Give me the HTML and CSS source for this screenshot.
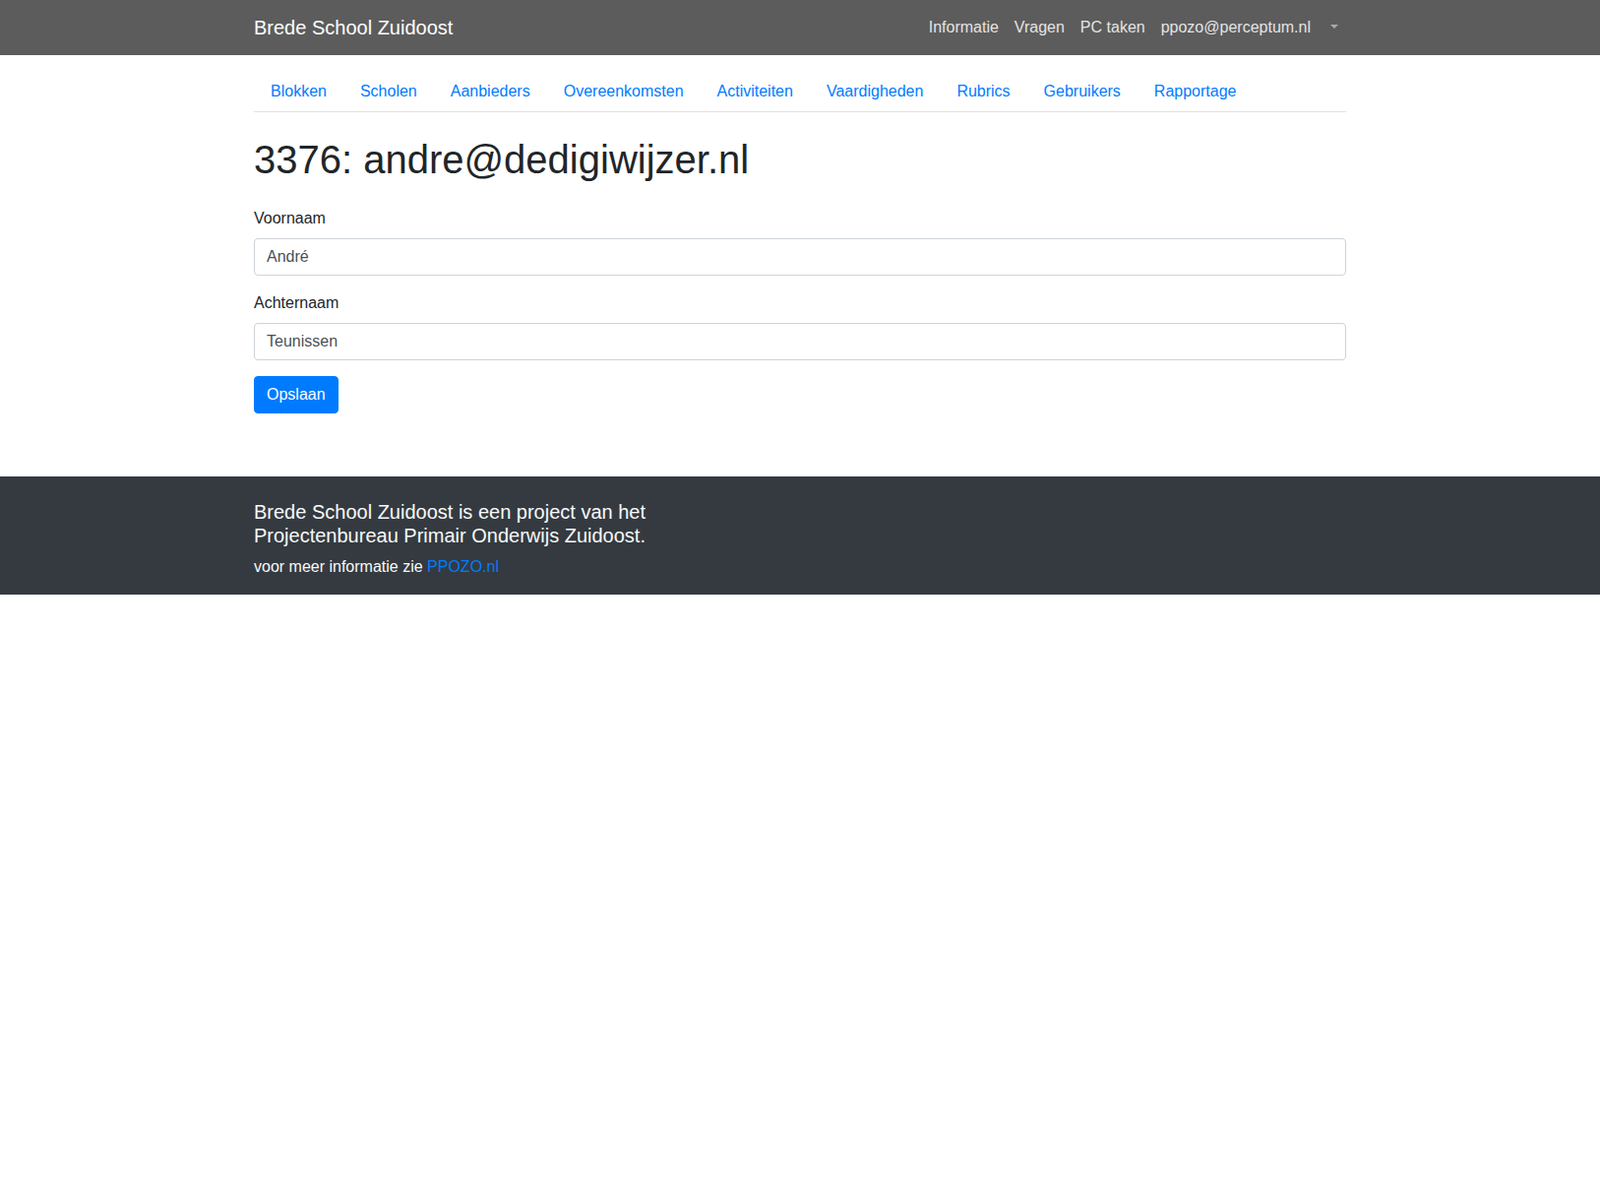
FILE: index.html
```html
<!DOCTYPE html>
<html lang="nl">
<head>
<meta charset="utf-8">
<title>Brede School Zuidoost</title>
<link rel="stylesheet" href="styles.css">
</head>
<body>
<nav class="topbar">
  <div class="container topbar-inner">
    <a class="brand" href="#">Brede School Zuidoost</a>
    <ul class="topnav">
      <li><a class="topnav-link" href="#">Informatie</a></li>
      <li><a class="topnav-link" href="#">Vragen</a></li>
      <li><a class="topnav-link" href="#">PC taken</a></li>
      <li><a class="topnav-link" href="#">ppozo@perceptum.nl</a></li>
      <li><a class="topnav-link toggle" href="#"><span class="caret"></span></a></li>
    </ul>
  </div>
</nav>

<main class="container main">
  <ul class="tabs">
    <li><a class="tab-link" href="#">Blokken</a></li>
    <li><a class="tab-link" href="#">Scholen</a></li>
    <li><a class="tab-link" href="#">Aanbieders</a></li>
    <li><a class="tab-link" href="#">Overeenkomsten</a></li>
    <li><a class="tab-link" href="#">Activiteiten</a></li>
    <li><a class="tab-link" href="#">Vaardigheden</a></li>
    <li><a class="tab-link" href="#">Rubrics</a></li>
    <li><a class="tab-link" href="#">Gebruikers</a></li>
    <li><a class="tab-link" href="#">Rapportage</a></li>
  </ul>

  <h1 class="title">3376: andre@dedigiwijzer.nl</h1>

  <form class="form">
    <div class="form-group">
      <label class="label" for="voornaam">Voornaam</label>
      <input class="input" id="voornaam" type="text" value="André">
    </div>
    <div class="form-group">
      <label class="label" for="achternaam">Achternaam</label>
      <input class="input" id="achternaam" type="text" value="Teunissen">
    </div>
    <button class="btn" type="button">Opslaan</button>
  </form>
</main>

<footer class="footer">
  <div class="container">
    <h5 class="footer-title">Brede School Zuidoost is een project van het<br>Projectenbureau Primair Onderwijs Zuidoost.</h5>
    <p class="footer-text">voor meer informatie zie <a class="footer-link" href="#">PPOZO.nl</a></p>
  </div>
</footer>
</body>
</html>
```

FILE: styles.css
```css
* {
  box-sizing: border-box;
}

html, body {
  margin: 0;
  padding: 0;
}

body {
  font-family: "Liberation Sans", Arial, Helvetica, sans-serif;
  font-size: 16px;
  line-height: 1.5;
  color: #212529;
  background: #ffffff;
}

a {
  text-decoration: none;
}

.container {
  width: 100%;
  max-width: 1140px;
  margin: 0 auto;
  padding: 0 15px;
}

/* Top bar */
.topbar {
  background: #5c5c5c;
  height: 56px;
}

.topbar-inner {
  height: 56px;
  display: flex;
  align-items: center;
  justify-content: space-between;
}

.brand {
  color: #ffffff;
  font-size: 20px;
  line-height: 30px;
}

.topnav {
  list-style: none;
  margin: 0;
  padding: 0;
  display: flex;
  align-items: center;
}

.topnav-link {
  display: block;
  padding: 8px;
  color: #e4e4e4;
  font-size: 16px;
  line-height: 24px;
}

.caret {
  display: inline-block;
  margin-left: 4px;
  vertical-align: 4px;
  width: 0;
  height: 0;
  border-top: 4.8px solid #a9a9a9;
  border-left: 4.8px solid transparent;
  border-right: 4.8px solid transparent;
}

/* Tabs */
.main {
  padding-bottom: 64px;
}

.tabs {
  list-style: none;
  margin: 16px 0 0;
  padding: 0;
  display: flex;
  border-bottom: 1px solid #dee2e6;
}

.tab-link {
  display: block;
  padding: 8px 16px;
  margin-bottom: -1px;
  border: 1px solid transparent;
  color: #007bff;
  line-height: 24px;
}

.title {
  font-size: 40px;
  font-weight: 500;
  line-height: 1.2;
  margin: 24px 0 24px;
  color: #212529;
}

/* Form */
.form {
  margin: 0;
}

.form-group {
  margin-bottom: 16px;
}

.label {
  display: block;
  margin-bottom: 8px;
  line-height: 24px;
}

.input {
  display: block;
  width: 100%;
  height: 38px;
  padding: 6px 12px;
  font-family: inherit;
  font-size: 16px;
  line-height: 24px;
  color: #495057;
  background: #ffffff;
  border: 1px solid #ced4da;
  border-radius: 4px;
}

.btn {
  display: inline-block;
  height: 38px;
  padding: 6px 12px;
  font-family: inherit;
  font-size: 16px;
  line-height: 24px;
  color: #ffffff;
  background: #007bff;
  border: 1px solid #007bff;
  border-radius: 4px;
}

/* Footer */
.footer {
  background: #343a40;
  color: #f8f9fa;
  padding: 24px 0 16px;
}

.footer-title {
  font-size: 20px;
  font-weight: 400;
  line-height: 1.2;
  margin: 0 0 8px;
}

.footer-text {
  margin: 0;
  line-height: 24px;
}

.footer-link {
  color: #007bff;
}
```
